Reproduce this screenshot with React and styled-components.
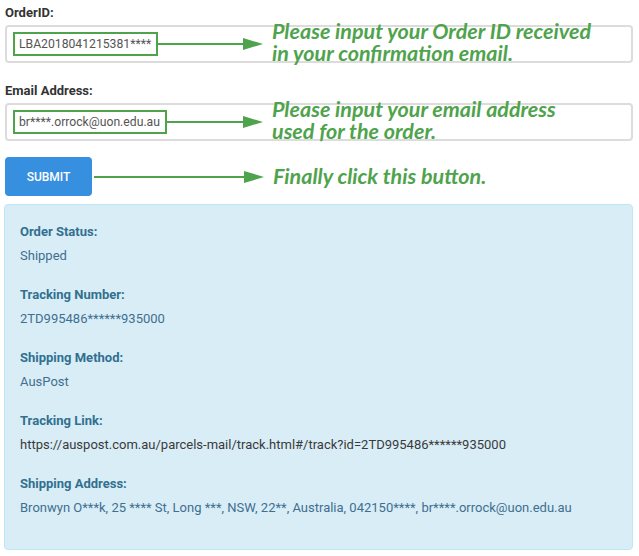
import React from "react";
import styled, { createGlobalStyle } from "styled-components";

const Global = createGlobalStyle`
  html, body { margin: 0; padding: 0; background: #fff; }
  body { font-family: Roboto, "Liberation Sans", Arial, sans-serif; }
  * { box-sizing: border-box; }
`;

const GREEN = "#4fa34c";

const Page = styled.div`
  width: 629px;
  margin-left: 4px;
  padding-top: 3px;
  padding-bottom: 7px;
`;

const Group = styled.div`
  margin-bottom: ${(p) => p.$mb || 18}px;
  padding-left: 1px;
`;

const Label = styled.div`
  font-size: 13px;
  font-weight: 700;
  line-height: 20px;
  color: #333;
  margin-bottom: 2px;
`;

const Field = styled.div`
  height: 38px;
  border: 2px solid #dcdcdc;
  border-radius: 4px;
  display: grid;
  grid-template-columns: 250px 1fr;
  grid-template-rows: 34px;
  column-gap: 9px;
  align-items: center;
  padding-left: 6px;
`;

const Lead = styled.div`
  display: flex;
  align-items: center;
  min-width: 0;
`;

const Highlight = styled.span`
  flex: none;
  height: 24px;
  border: 2px solid ${GREEN};
  display: flex;
  align-items: center;
  padding: 0 5px 0 4px;
  font-size: 12.2px;
  color: #555;
  white-space: nowrap;
`;

const Arrow = styled.span`
  flex: 1;
  position: relative;
  height: 2px;
  background: ${GREEN};
  margin-right: 20px;
  &::after {
    content: "";
    position: absolute;
    right: -20px;
    top: -5px;
    border-left: 20px solid ${GREEN};
    border-top: 6px solid transparent;
    border-bottom: 6px solid transparent;
  }
`;

const Note = styled.div`
  font-family: Lato, "Open Sans", sans-serif;
  font-style: italic;
  font-weight: 700;
  font-size: 21.5px;
  color: ${GREEN};
  white-space: nowrap;
  margin-bottom: ${(p) => p.$lift || 0}px;
`;

const NoteLine = styled.div`
  height: 22px;
  line-height: 22px;
`;

const ActionRow = styled.div`
  display: grid;
  grid-template-columns: 259px 1fr;
  grid-template-rows: 39px;
  column-gap: 9px;
  align-items: center;
  margin-bottom: 8px;
  padding-left: 1px;
`;

const Button = styled.button`
  flex: none;
  width: 87px;
  height: 39px;
  border: none;
  border-radius: 4px;
  background: #368fdf;
  color: #fff;
  font-family: Roboto, "Liberation Sans", sans-serif;
  font-size: 12px;
  font-weight: 500;
  margin-right: 2px;
  padding: 0;
`;

const Alert = styled.div`
  background: #d9edf7;
  border: 1px solid #bce8f1;
  border-radius: 4px;
  padding: 17px 14px 31px 15px;
  color: #31708f;
`;

const Item = styled.div`
  & + & { margin-top: 19px; }
`;

const ItemLabel = styled.div`
  font-size: 13px;
  font-weight: 700;
  line-height: 20px;
`;

const ItemValue = styled.div`
  font-size: 13px;
  line-height: 20px;
  margin-top: 4px;
  color: ${(p) => (p.$link ? "#3a3a3a" : "#3f6f8f")};
  white-space: nowrap;
`;

const items = [
  ["Order Status:", "Shipped"],
  ["Tracking Number:", "2TD995486******935000"],
  ["Shipping Method:", "AusPost"],
  ["Tracking Link:", "https://auspost.com.au/parcels-mail/track.html#/track?id=2TD995486******935000", true],
  ["Shipping Address:", "Bronwyn O***k, 25 **** St, Long ***, NSW, 22**, Australia, 042150****, br****.orrock@uon.edu.au"],
];

export default function App() {
  return (
    <>
      <Global />
      <Page>
        <Group $mb={18}>
          <Label>OrderID:</Label>
          <Field>
            <Lead>
              <Highlight>LBA2018041215381****</Highlight>
              <Arrow />
            </Lead>
            <Note $lift={4}>
              <NoteLine>Please input your Order ID received</NoteLine>
              <NoteLine>in your confirmation email.</NoteLine>
            </Note>
          </Field>
        </Group>
        <Group $mb={16}>
          <Label>Email Address:</Label>
          <Field>
            <Lead>
              <Highlight>br****.orrock@uon.edu.au</Highlight>
              <Arrow />
            </Lead>
            <Note $lift={4}>
              <NoteLine>Please input your email address</NoteLine>
              <NoteLine>used for the order.</NoteLine>
            </Note>
          </Field>
        </Group>
        <ActionRow>
          <Lead>
            <Button>SUBMIT</Button>
            <Arrow />
          </Lead>
          <Note $lift={2}>
            <NoteLine>Finally click this button.</NoteLine>
          </Note>
        </ActionRow>
        <Alert>
          {items.map(([l, v, link]) => (
            <Item key={l}>
              <ItemLabel>{l}</ItemLabel>
              <ItemValue $link={link}>{v}</ItemValue>
            </Item>
          ))}
        </Alert>
      </Page>
    </>
  );
}
